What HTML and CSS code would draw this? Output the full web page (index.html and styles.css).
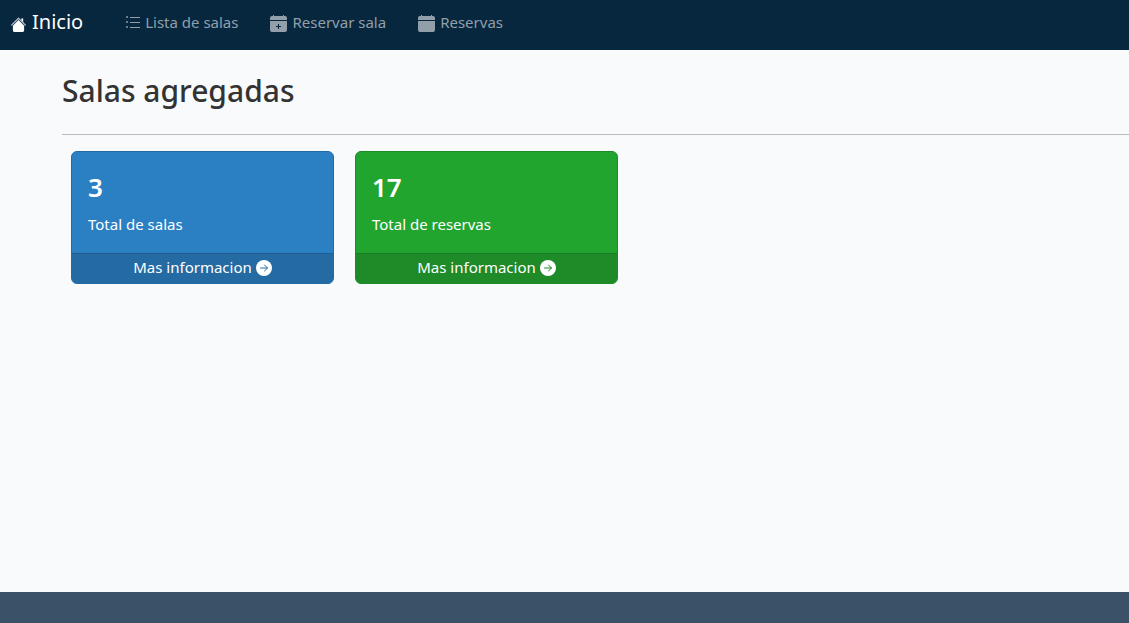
FILE: index.html
```html
<!DOCTYPE html>
<html lang="es">
<head>
<meta charset="utf-8">
<meta name="viewport" content="width=device-width, initial-scale=1">
<title>Salas agregadas</title>
<link rel="stylesheet" href="styles.css">
</head>
<body>
<nav class="navbar">
  <a class="brand" href="#">
    <svg class="icon-home" viewBox="0 0 16 16" aria-hidden="true"><path fill="#fff" d="M8 3.3l6 6V14.500a1.500 1.500 0 0 1-1.500 1.500h-9A1.500 1.500 0 0 1 2 14.500V9.300z"/><path fill="#fff" d="M11 1.500h2v5l-2-2z"/><path fill="none" stroke="#a6b2bc" stroke-width="1.500" stroke-linecap="round" d="M.8 8.600L8 1.400l7.200 7.200"/></svg>
    <span>Inicio</span>
  </a>
  <ul class="menu">
    <li><a class="link" href="#">
      <svg class="icon-list" viewBox="0 0 14 14" aria-hidden="true"><path fill="currentColor" d="M4 2h10v1H4zM4 7h10v1H4zM4 12h10v1H4z"/><path fill="currentColor" opacity=".7" d="M0 1h2v2H0zM0 6h2v2H0zM0 11h2v2H0z"/></svg>
      <span>Lista de salas</span></a></li>
    <li><a class="link" href="#">
      <svg class="icon-cal" viewBox="0 0 17 17" aria-hidden="true"><path fill="currentColor" d="M3 0h1v1h9V0h1v1h1a2 2 0 0 1 2 2v2H0V3a2 2 0 0 1 2-2h1z"/><path fill="currentColor" fill-rule="evenodd" d="M0 6h17v9a2 2 0 0 1-2 2H2a2 2 0 0 1-2-2zM8 9v2H6v1h2v2h1v-2h2v-1H9V9z"/></svg>
      <span>Reservar sala</span></a></li>
    <li><a class="link" href="#">
      <svg class="icon-cal" viewBox="0 0 17 17" aria-hidden="true"><path fill="currentColor" d="M3 0h1v1h9V0h1v1h1a2 2 0 0 1 2 2v2H0V3a2 2 0 0 1 2-2h1zM0 6h17v9a2 2 0 0 1-2 2H2a2 2 0 0 1-2-2z"/></svg>
      <span>Reservas</span></a></li>
  </ul>
</nav>
<main class="content">
  <h1 class="title">Salas agregadas</h1>
  <hr class="rule">
  <div class="cards">
    <section class="card card-blue">
      <div class="card-body"><h2 class="count">3</h2><p class="label">Total de salas</p></div>
      <a class="card-footer" href="#"><span>Mas informacion</span>
        <svg class="icon-go" viewBox="0 0 16 16" aria-hidden="true"><circle cx="8" cy="8" r="8" fill="#fff"/><path class="arrow" d="M4.500 8h7M8.500 5l3 3-3 3"/></svg></a>
    </section>
    <section class="card card-green">
      <div class="card-body"><h2 class="count">17</h2><p class="label">Total de reservas</p></div>
      <a class="card-footer" href="#"><span>Mas informacion</span>
        <svg class="icon-go" viewBox="0 0 16 16" aria-hidden="true"><circle cx="8" cy="8" r="8" fill="#fff"/><path class="arrow" d="M4.500 8h7M8.500 5l3 3-3 3"/></svg></a>
    </section>
  </div>
</main>
<footer class="footer"></footer>
</body>
</html>
```

FILE: styles.css
```css
* { box-sizing: border-box; }
body {
  margin: 0;
  min-height: 100vh;
  display: flex;
  flex-direction: column;
  background: #f8fafc;
  color: #343a40;
  font-family: "Segoe UI", "Noto Sans", "Open Sans", sans-serif;
  font-size: 15px;
  line-height: 24px;
}
a { color: inherit; text-decoration: none; }
svg { flex: none; }
.navbar {
  display: flex;
  align-items: center;
  gap: 43px;
  padding: 7px 11px 13px;
  background: #07273f;
}
.brand {
  display: flex;
  align-items: center;
  gap: 6px;
  color: #fff;
  font-size: 20px;
  line-height: 30px;
}
.icon-home { width: 15px; height: 15px; margin-top: 4px; }
.menu {
  display: flex;
  gap: 32px;
  margin: 0;
  padding: 0;
  list-style: none;
}
.link {
  display: flex;
  align-items: center;
  gap: 5px;
  color: #929faa;
}
.icon-list { width: 14px; height: 14px; }
.icon-cal { width: 17px; height: 17px; margin-top: 2px; }
.content { flex: 1; padding: 21px 0 16px 62px; }
.title {
  margin: 0;
  font-size: 30px;
  font-weight: 500;
  line-height: 39px;
  color: #333;
}
.rule {
  margin: 24px 0 16px;
  border: 0;
  border-top: 1px solid #b9bbbd;
}
.cards {
  display: flex;
  flex-wrap: wrap;
  gap: 21px;
  padding: 0 9px;
}
.card {
  width: 263px;
  overflow: hidden;
  border: 1px solid;
  border-radius: 6px;
  color: #fff;
}
.card-blue { background: #2b80c4; border-color: #236ba4; }
.card-green { background: #22a52f; border-color: #1e8a28; }
.card-body { padding: 17px 16px; }
.count {
  margin: 0 0 7px;
  font-size: 26px;
  font-weight: 600;
  line-height: 36px;
}
.label { margin: 0; }
.card-footer {
  display: flex;
  align-items: center;
  justify-content: center;
  gap: 4px;
  padding: 1px 0 4px;
  border-top: 1px solid;
}
.card-blue .card-footer { background: #246aa3; border-color: #205c8d; }
.card-green .card-footer { background: #1e8a28; border-color: #1b7a24; }
.icon-go { width: 16px; height: 16px; margin-top: 2px; }
.arrow {
  fill: none;
  stroke-linecap: round;
  stroke-linejoin: round;
}
.card-blue .arrow { stroke: #246aa3; }
.card-green .arrow { stroke: #1e8a28; }
.footer { height: 31px; background: #3a5167; }
```
